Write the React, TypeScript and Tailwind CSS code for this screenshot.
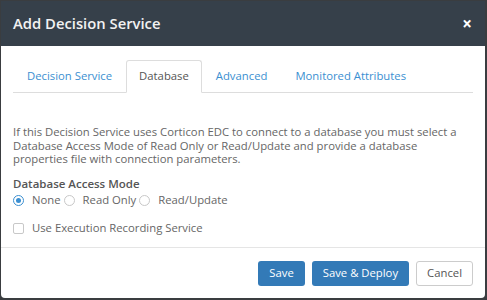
import { useState } from 'react'

const tabs = ['Decision Service', 'Database', 'Advanced', 'Monitored Attributes']
const modes = ['None', 'Read Only', 'Read/Update']

export default function App() {
  const [tab, setTab] = useState('Database')
  const [mode, setMode] = useState('None')
  const [recording, setRecording] = useState(false)

  return (
    <div className="h-[300px] w-[487px] bg-[#3a3d40] pl-px pt-px font-['Open_Sans',sans-serif]">
      <div className="flex h-[297px] w-[484px] flex-col overflow-hidden rounded-b-[4px] bg-white">
        {/* Header */}
        <div className="flex h-[45px] items-center justify-between bg-[#36404a] pl-3 pr-[13px]">
          <h2 className="text-[14.8px] font-semibold text-[#f2f2f2]">Add Decision Service</h2>
          <button className="text-[17px] font-bold leading-none text-white">×</button>
        </div>

        {/* Body */}
        <div className="flex-1 px-3 pt-[14px]">
          <div className="flex border-b border-[#dddddd]">
            {tabs.map((t) => (
              <button
                key={t}
                onClick={() => setTab(t)}
                className={
                  t === tab
                    ? '-mb-px h-[33px] rounded-t-[3px] border border-[#dddddd] border-b-white bg-white px-[12px] text-[11.3px] text-[#555555]'
                    : 'h-[32px] border border-transparent px-[13px] text-[11.3px] text-[#3b8fd1]'
                }
              >
                {t}
              </button>
            ))}
          </div>

          <p className="mt-[32px] text-[11.3px] leading-[13.5px] text-[#666666]">
            If this Decision Service uses Corticon EDC to connect to a database you must select a Database Access
            Mode of Read Only or Read/Update and provide a database properties file with connection parameters.
          </p>

          <div className="mt-[10px] text-[11.5px] font-semibold leading-[15px] text-[#555555]">Database Access Mode</div>
          <div className="mt-[2px] flex h-[16px] items-center text-[11.3px] text-[#666666]">
            {modes.map((m) => (
              <label key={m} className="mr-[3px] flex items-center">
                <span
                  onClick={() => setMode(m)}
                  className={
                    m === mode
                      ? 'mr-[8px] flex h-[11px] w-[11px] items-center justify-center rounded-full border border-[#3b8fd1]'
                      : 'mr-[8px] flex h-[11px] w-[11px] items-center justify-center rounded-full border border-[#c8c8c8]'
                  }
                >
                  {m === mode && <span className="h-[5px] w-[5px] rounded-full bg-[#3b8fd1]" />}
                </span>
                {m}
              </label>
            ))}
          </div>

          <label className="mt-[13px] flex h-[14px] items-center text-[11.3px] text-[#666666]">
            <span
              onClick={() => setRecording(!recording)}
              className="mr-[8px] h-[11px] w-[11px] rounded-[2px] border border-[#c8c8c8]"
            />
            Use Execution Recording Service
          </label>
        </div>

        {/* Footer */}
        <div className="flex h-[51px] items-center justify-end gap-[7px] border-t border-[#e5e5e5] px-[12px]">
          <button className="h-[25px] rounded-[3px] bg-[#337ab7] px-[11px] text-[11.3px] text-white">Save</button>
          <button className="h-[25px] rounded-[3px] bg-[#337ab7] px-[11px] text-[11.3px] text-white">Save &amp; Deploy</button>
          <button className="h-[25px] rounded-[3px] border border-[#cccccc] bg-white px-[10px] text-[11.3px] text-[#555555]">
            Cancel
          </button>
        </div>
      </div>
    </div>
  )
}
